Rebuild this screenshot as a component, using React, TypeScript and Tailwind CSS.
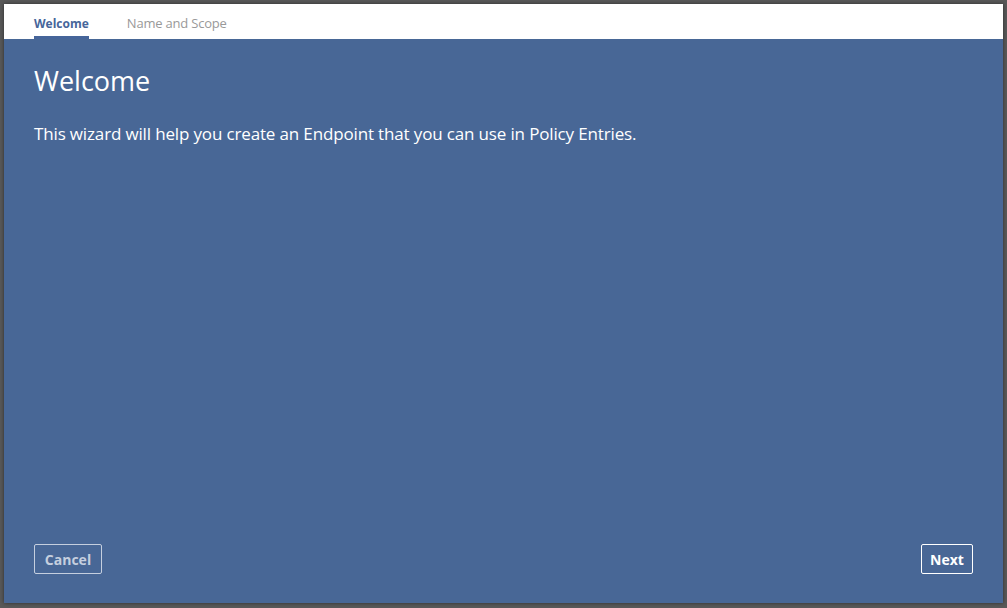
export default function App() {
  return (
    <div className="h-[608px] w-[1007px] bg-[#595959] pl-[4px] pt-[4px]" style={{ fontFamily: '"Open Sans", "Noto Sans", sans-serif' }}>
      <div className="flex h-[599px] w-[999px] flex-col bg-[#486796] shadow-[0_0_4px_rgba(0,0,0,0.5)]">
        {/* tabs */}
        <div className="flex h-[35px] items-end gap-[38px] bg-white pl-[30px]">
          <div className="flex h-full flex-col justify-end">
            <span className="pb-[6px] text-[12px] font-bold leading-none text-[#46659a]">Welcome</span>
            <div className="h-[3px] bg-[#46659a]" />
          </div>
          <div className="flex h-full flex-col justify-end">
            <span className="pb-[9px] text-[13px] leading-none text-[#999999] tracking-[-0.2px]">Name and Scope</span>
          </div>
        </div>

        <div className="flex flex-1 flex-col px-[30px]">
          <h1 className="mt-[26px] text-[27px] leading-[32px] text-white">Welcome</h1>
          <p className="mt-[26px] text-[17px] leading-[22px] text-white tracking-[-0.15px]">
            This wizard will help you create an Endpoint that you can use in Policy Entries.
          </p>

          <div className="mt-auto mb-[29px] flex items-center justify-between">
            <button className="h-[30px] w-[68px] rounded-[2px] border border-[#c5cfdf] text-[14px] font-bold text-[#c5cfdf]">
              Cancel
            </button>
            <button className="h-[30px] w-[52px] rounded-[2px] border border-white text-[14px] font-bold text-white">
              Next
            </button>
          </div>
        </div>
      </div>
    </div>
  )
}
